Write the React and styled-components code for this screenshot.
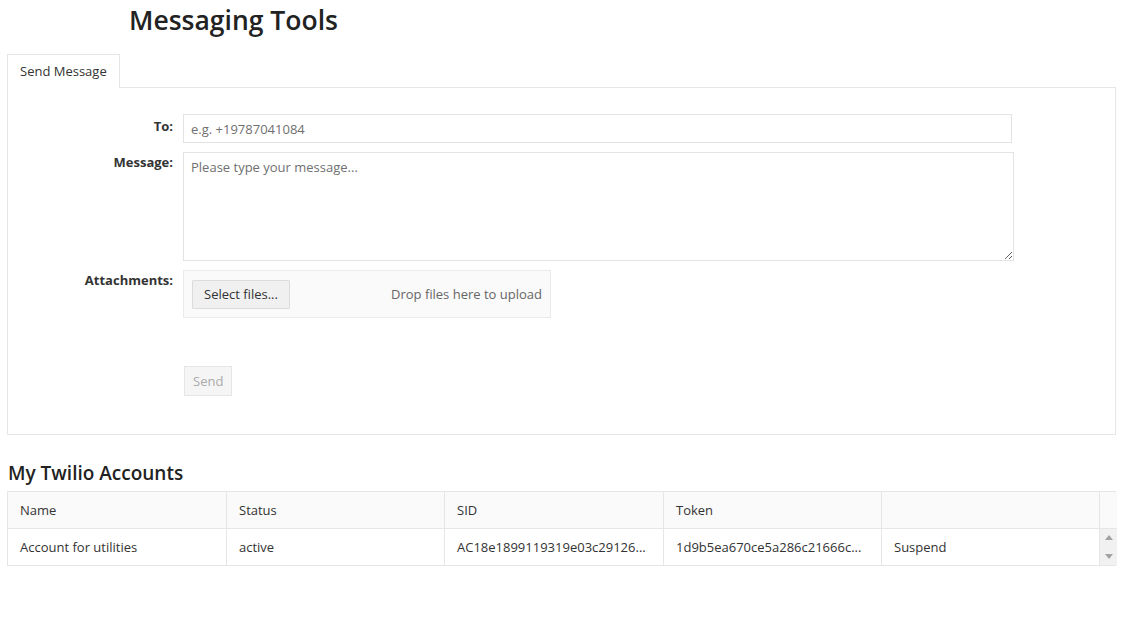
import React from "react";
import styled, { createGlobalStyle } from "styled-components";

const GlobalStyle = createGlobalStyle`
  body {
    margin: 0;
    background: #fff;
    font-family: "Open Sans", "Noto Sans", sans-serif;
    color: #333;
  }
`;

const Page = styled.div`
  padding: 0 24px 0 7px;
  display: flex;
  flex-direction: column;
`;

const Title = styled.h1`
  margin: 0;
  padding: 2px 0 0 122px;
  font-size: 26.5px;
  font-weight: 600;
  color: #222;
  height: 54px;
  box-sizing: border-box;
  line-height: 36px;
`;

const TabStrip = styled.div`
  display: flex;
  border-bottom: 1px solid #e6e6e6;
`;

const Tab = styled.div`
  padding: 0 12px 1px;
  height: 32px;
  line-height: 33px;
  font-size: 13px;
  color: #333;
  border: 1px solid #e6e6e6;
  border-bottom: none;
  background: #fff;
  margin-bottom: -1px;
`;

const Panel = styled.div`
  border: 1px solid #e6e6e6;
  border-top: none;
  padding: 26px 0 38px 0;
  display: flex;
  flex-direction: column;
  gap: 9px;
`;

const Row = styled.div`
  display: flex;
  align-items: flex-start;
  gap: 10px;
`;

const Label = styled.label`
  width: 165px;
  text-align: right;
  font-weight: 700;
  font-size: 13px;
  color: #333;
  padding-top: ${(p) => p.$top || 3}px;
`;

const TextInput = styled.input`
  box-sizing: border-box;
  width: 829px;
  height: 29px;
  border: 1px solid #e3e3e3;
  padding: 0 7px;
  font-family: inherit;
  font-size: 13px;
  color: #333;
  outline: none;
  &::placeholder {
    color: #707070;
  }
`;

const TextArea = styled.textarea`
  box-sizing: border-box;
  width: 831px;
  height: 109px;
  border: 1px solid #e3e3e3;
  padding: 5px 7px;
  font-family: inherit;
  font-size: 13px;
  color: #333;
  outline: none;
  margin: 0;
  &::placeholder {
    color: #707070;
  }
`;

const DropZone = styled.div`
  box-sizing: border-box;
  width: 368px;
  height: 48px;
  background: #fafafa;
  border: 1px solid #ebebeb;
  display: flex;
  align-items: center;
  justify-content: space-between;
  padding: 0 8px;
`;

const FileButton = styled.button`
  height: 29px;
  padding: 0 11px;
  background: #f0f0f0;
  border: 1px solid #dcdcdc;
  border-radius: 1px;
  font-family: inherit;
  font-size: 13px;
  color: #333;
`;

const DropHint = styled.span`
  font-size: 13px;
  color: #666;
`;

const SendRow = styled.div`
  padding: 39px 0 0 176px;
`;

const SendButton = styled.button`
  height: 30px;
  padding: 0 8px;
  background: #f5f5f5;
  border: 1px solid #e6e6e6;
  font-family: inherit;
  font-size: 13px;
  color: #aaa;
`;

const SectionTitle = styled.h2`
  margin: 0;
  padding: 25px 0 5px 1px;
  font-size: 19px;
  font-weight: 600;
  color: #222;
  line-height: 26px;
`;

const Grid = styled.div`
  display: grid;
  grid-template-columns: 219px 218px 219px 218px 218px 17px;
  border: 1px solid #e6e6e6;
  font-size: 13px;
  color: #333;
`;

const Cell = styled.div`
  height: 36px;
  line-height: 36px;
  padding: 0 12px;
  white-space: nowrap;
  background: ${(p) => (p.$head ? "#fafafa" : "#fff")};
  border-right: 1px solid #e6e6e6;
  border-bottom: ${(p) => (p.$head ? "1px solid #e6e6e6" : "none")};
`;

const HeadFiller = styled.div`
  background: #fafafa;
  border-bottom: 1px solid #e6e6e6;
`;

const Scrollbar = styled.div`
  background: #f1f1f1;
  display: flex;
  flex-direction: column;
  justify-content: space-between;
  align-items: center;
  padding: 6px 0;
  box-sizing: border-box;
  height: 36px;
`;

const Arrow = ({ up }) => (
  <svg width="8" height="5" viewBox="0 0 8 5">
    <path d={up ? "M0 5 L4 0 L8 5 Z" : "M0 0 L4 5 L8 0 Z"} fill="#a3a3a3" />
  </svg>
);

const columns = ["Name", "Status", "SID", "Token", ""];
const accounts = [
  {
    name: "Account for utilities",
    status: "active",
    sid: "AC18e1899119319e03c29126...",
    token: "1d9b5ea670ce5a286c21666c...",
    action: "Suspend",
  },
];

export default function App() {
  return (
    <>
      <GlobalStyle />
      <Page>
        <Title>Messaging Tools</Title>
        <TabStrip>
          <Tab>Send Message</Tab>
        </TabStrip>
        <Panel>
          <Row>
            <Label $top={3}>To:</Label>
            <TextInput placeholder="e.g. +19787041084" />
          </Row>
          <Row>
            <Label $top={1}>Message:</Label>
            <TextArea placeholder="Please type your message..." />
          </Row>
          <Row>
            <Label $top={1}>Attachments:</Label>
            <DropZone>
              <FileButton>Select files...</FileButton>
              <DropHint>Drop files here to upload</DropHint>
            </DropZone>
          </Row>
          <SendRow>
            <SendButton disabled>Send</SendButton>
          </SendRow>
        </Panel>
        <SectionTitle>My Twilio Accounts</SectionTitle>
        <Grid>
          {columns.map((c, i) => (
            <Cell $head key={i}>
              {c}
            </Cell>
          ))}
          <HeadFiller />
          {accounts.map((a) => (
            <React.Fragment key={a.sid}>
              <Cell>{a.name}</Cell>
              <Cell>{a.status}</Cell>
              <Cell>{a.sid}</Cell>
              <Cell>{a.token}</Cell>
              <Cell>{a.action}</Cell>
              <Scrollbar>
                <Arrow up />
                <Arrow />
              </Scrollbar>
            </React.Fragment>
          ))}
        </Grid>
      </Page>
    </>
  );
}
